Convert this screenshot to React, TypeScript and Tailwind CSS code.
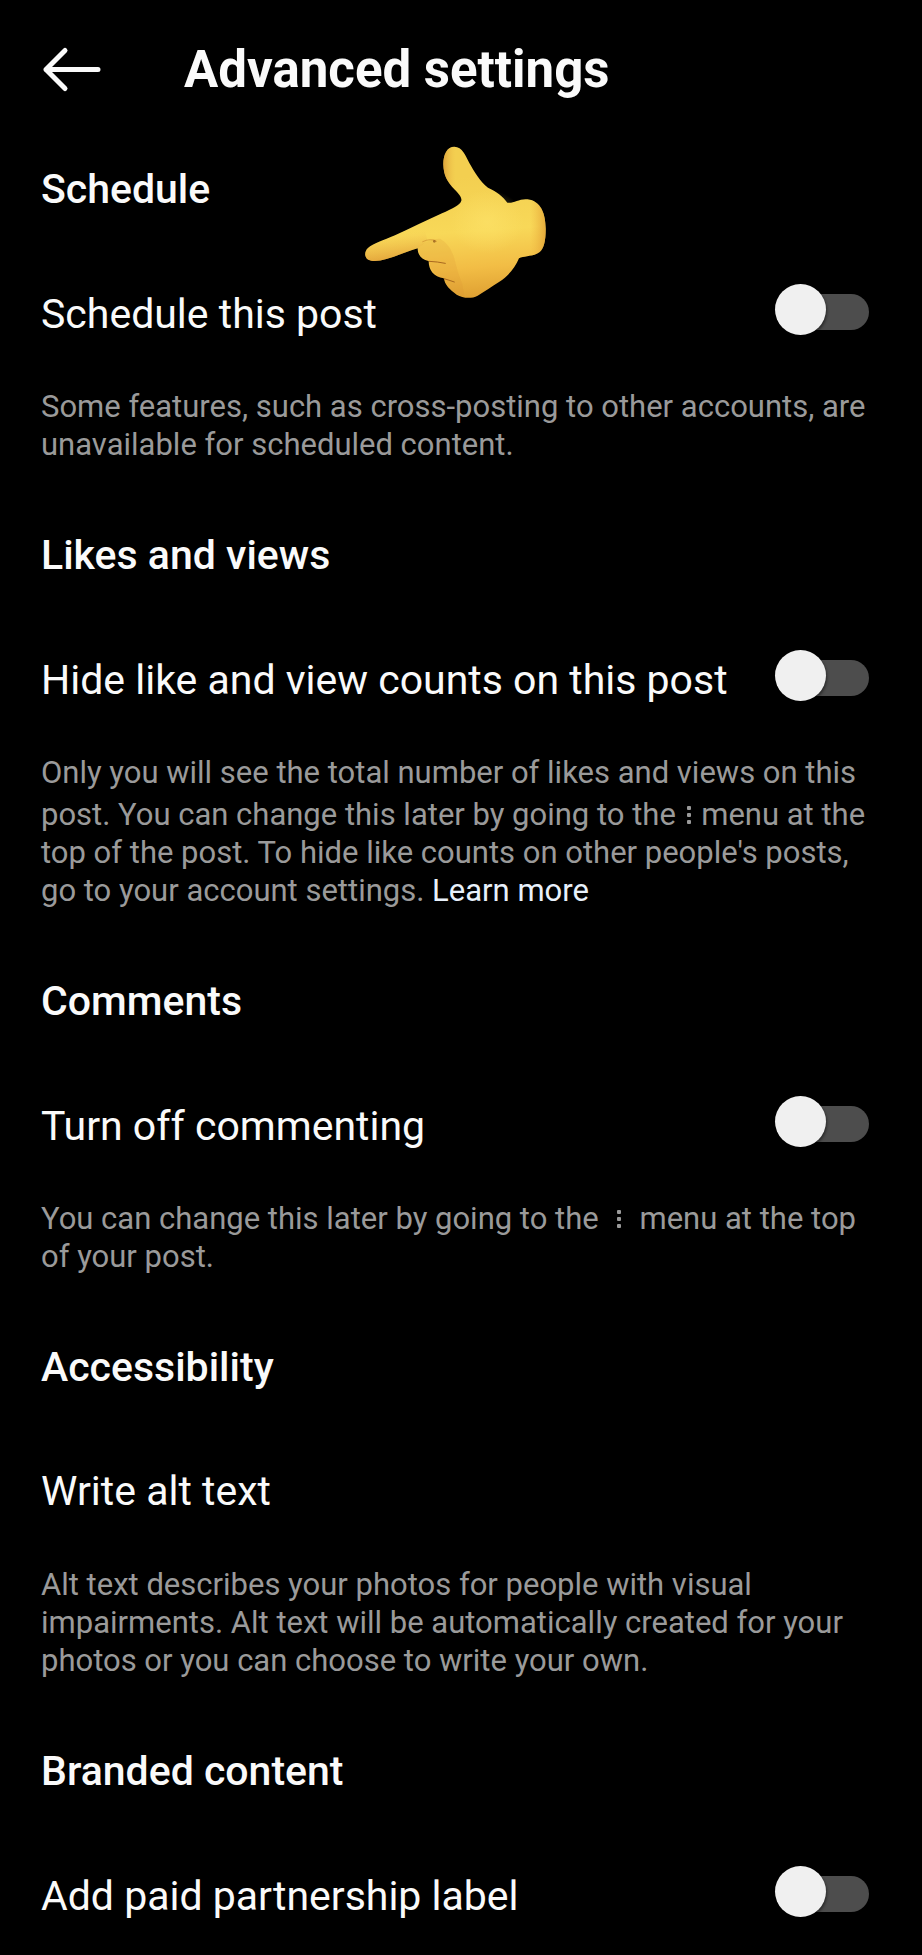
import { useId, useState } from "react";
import type { ReactNode } from "react";

function BackArrow() {
  return (
    <svg width="60" height="48" viewBox="0 0 60 48" fill="none" stroke="currentColor" strokeWidth="5" strokeLinecap="round" strokeLinejoin="round" aria-hidden="true">
      <path d="M24 4.5 5 23.5 24 42.5M5 23.5h52" />
    </svg>
  );
}

function MoreDots({ className }: { className: string }) {
  return (
    <svg className={`inline-block w-[10px] align-baseline ${className}`} viewBox="0 0 10 20" preserveAspectRatio="xMidYMax meet" fill="currentColor" role="img" aria-label="more">
      <rect x="3" y="1" width="4" height="4" rx="1" />
      <rect x="3" y="8" width="4" height="4" rx="1" />
      <rect x="3" y="15" width="4" height="4" rx="1" />
    </svg>
  );
}

function PointingHand() {
  return (
    <svg className="h-[180px] w-[210px]" viewBox="0 0 630 540" role="img" aria-label="Pointing hand">
      <defs>
        <linearGradient id="skin" x1="0.55" y1="0.2" x2="0.62" y2="1">
          <stop offset="0" stopColor="#f3cf50" />
          <stop offset="0.45" stopColor="#f8d858" />
          <stop offset="0.75" stopColor="#f2bd45" />
          <stop offset="1" stopColor="#dfa032" />
        </linearGradient>
        <linearGradient id="thumb" x1="0" y1="0" x2="1" y2="0">
          <stop offset="0" stopColor="#d99a35" stopOpacity="0.8" />
          <stop offset="0.5" stopColor="#f0c04a" stopOpacity="0" />
        </linearGradient>
        <linearGradient id="wrist" x1="0" y1="0" x2="1" y2="0">
          <stop offset="0.6" stopColor="#f0b540" stopOpacity="0" />
          <stop offset="1" stopColor="#e0a035" stopOpacity="0.8" />
        </linearGradient>
        <radialGradient id="palm" cx="0.5" cy="0.5" r="0.5">
          <stop offset="0" stopColor="#fde36a" stopOpacity="0.6" />
          <stop offset="1" stopColor="#fde36a" stopOpacity="0" />
        </radialGradient>
        <linearGradient id="finger" x1="0.4" y1="0" x2="0.6" y2="1">
          <stop offset="0.3" stopColor="#f0bd50" stopOpacity="0" />
          <stop offset="1" stopColor="#d8902f" stopOpacity="0.7" />
        </linearGradient>
      </defs>
      <path
        fill="url(#skin)"
        d="M313 50C292 50 280 72 280 103C281 137 292 156 313 178C327 192 336 203 334 212C330 226 306 235 276 250C232 270 182 294 135 316C100 331 70 340 54 354C43 364 42 382 55 389C68 396 89 393 109 387C141 378 171 364 203 355C203 374 214 389 236 393C236 420 250 440 282 445C284 465 300 480 320 494C338 505 364 507 383 497C406 483 424 471 447 456C475 438 495 414 507 385C524 377 552 380 569 366C582 355 587 333 587 297C587 250 572 213 533 208C507 205 490 222 472 218C459 199 439 184 414 173C390 155 373 125 358 99C347 77 337 50 313 50Z"
      />
      <path fill="url(#thumb)" d="M313 50C292 50 280 72 280 103C281 137 292 156 313 178C327 192 336 203 334 212L354 190L350 95Q338 50 313 50Z" />
      <path fill="url(#finger)" d="M54 354C70 340 100 331 135 316L220 278L232 332L203 355C171 364 141 378 109 387C89 393 68 396 55 389C42 382 43 364 54 354Z" />
      <path fill="url(#wrist)" d="M472 218C490 222 507 205 533 208C572 213 587 250 587 297C587 333 582 355 569 366C552 380 524 377 507 385C485 340 470 280 472 218Z" />
      <ellipse cx="412" cy="275" rx="110" ry="95" fill="url(#palm)" />
      <path fill="#d99031" opacity="0.18" d="M203 355Q230 325 270 326Q305 345 316 397Q323 430 337 461L343 500Q292 485 282 445Q248 440 236 393Q205 385 203 355Z" />
      <g fill="none" strokeLinecap="round">
        <path d="M218 335Q243 323 260 334" stroke="#c27c25" strokeWidth="3" opacity="0.5" />
        <circle cx="253" cy="334" r="4" fill="#98601e" opacity="0.8" />
        <path d="M238 394Q262 395 286 400" stroke="#a8681f" strokeWidth="3" />
        <path d="M282 446Q296 450 313 456" stroke="#a8681f" strokeWidth="3" />
      </g>
    </svg>
  );
}

function Toggle({ id }: { id: string }) {
  const [on, setOn] = useState(false);

  return (
    <span className="grid h-[60px] w-[94px] shrink-0 items-start">
      <span className={`col-start-1 row-start-1 mt-[10px] ml-2 h-9 rounded-full ${on ? "bg-[#0095f6]" : "bg-[#4d4d4d]"}`} />
      <input
        id={id}
        type="checkbox"
        role="switch"
        checked={on}
        onChange={(e) => setOn(e.target.checked)}
        className="z-10 col-start-1 row-start-1 size-[51px] cursor-pointer appearance-none rounded-full bg-[#f0f0f0] shadow-[1px_2px_3px_rgba(0,0,0,0.45)] checked:justify-self-end"
      />
    </span>
  );
}

function Setting({ label }: { label: string }) {
  const id = useId();

  return (
    <div className="mt-[71px] flex h-[60px] items-center justify-between">
      <label htmlFor={id}>{label}</label>
      <Toggle id={id} />
    </div>
  );
}

function Section({ title, children }: { title: string; children: ReactNode }) {
  return (
    <section className="relative mb-[67px]">
      <h2 className="font-medium">{title}</h2>
      {children}
    </section>
  );
}

function Note({ children }: { children: ReactNode }) {
  return <p className="mt-11 text-[31px] leading-[38px] text-[#9a9a9a]">{children}</p>;
}

export default function App() {
  return (
    <div className="min-h-screen bg-black pr-[53px] pl-[41px] font-['Roboto',sans-serif] text-[41px] leading-[48px] text-[#fafafa]">
      <header className="flex items-center pt-10">
        <button type="button" aria-label="Back" className="flex w-[143px] shrink-0 items-center">
          <BackArrow />
        </button>
        <h1 className="text-[51px] leading-[60px] font-bold">Advanced settings</h1>
      </header>

      <main className="pt-[65px]">
        <Section title="Schedule">
          <div className="pointer-events-none absolute top-[-35px] left-[309px]">
            <PointingHand />
          </div>
          <Setting label="Schedule this post" />
          <Note>Some features, such as cross-posting to other accounts, are unavailable for scheduled content.</Note>
        </Section>

        <Section title="Likes and views">
          <Setting label="Hide like and view counts on this post" />
          <Note>
            Only you will see the total number of likes and views on this post. You can change this later by going to the{" "}
            <MoreDots className="h-[33px]" /> menu at the top of the post. To hide like counts on other people's posts, go
            to your account settings.{" "}
            <a href="#learn-more" className="text-[#e8f1fb]">
              Learn more
            </a>
          </Note>
        </Section>

        <Section title="Comments">
          <Setting label="Turn off commenting" />
          <Note>
            You can change this later by going to the &nbsp;
            <MoreDots className="h-5" />
            &nbsp; menu at the top of your post.
          </Note>
        </Section>

        <Section title="Accessibility">
          <button type="button" className="mt-[71px] flex h-[60px] w-full items-center pb-0.5 text-left">
            Write alt text
          </button>
          <Note>
            Alt text describes your photos for people with visual impairments. Alt text will be automatically created for
            your photos or you can choose to write your own.
          </Note>
        </Section>

        <section className="pb-2">
          <h2 className="font-medium">Branded content</h2>
          <Setting label="Add paid partnership label" />
        </section>
      </main>
    </div>
  );
}
